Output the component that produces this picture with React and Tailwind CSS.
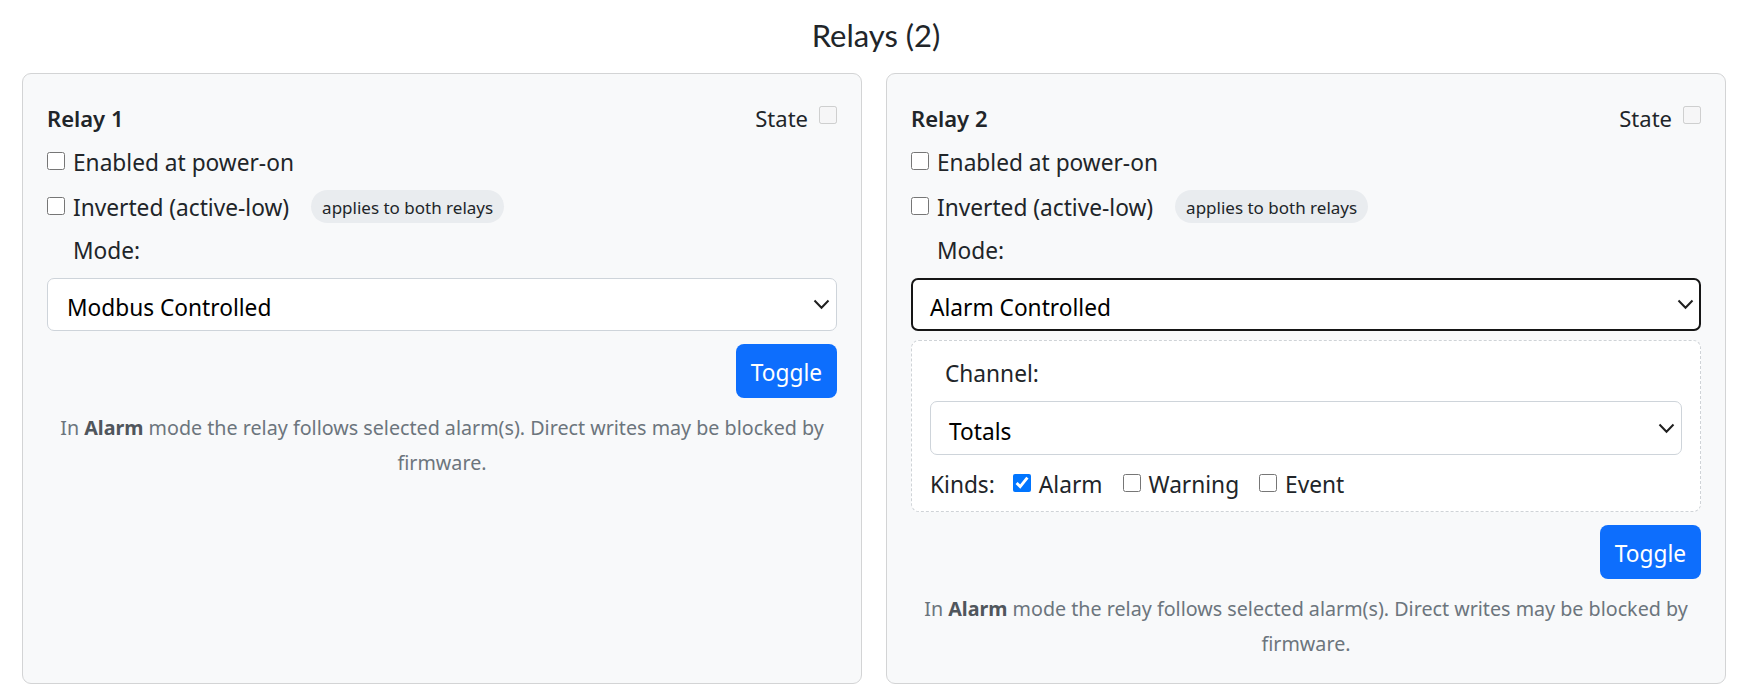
import React from "react";

const relays = [
  { name: "Relay 1", mode: "Modbus Controlled", focused: false, alarm: false },
  { name: "Relay 2", mode: "Alarm Controlled", focused: true, alarm: true },
];

function Chevron() {
  return (
    <svg width="17" height="11" viewBox="0 0 17 11" className="shrink-0">
      <path d="M1.5 1.5 8.5 8.8 15.5 1.5" fill="none" stroke="#1f1f1f" strokeWidth="2" />
    </svg>
  );
}

function Check({ checked = false, disabled = false }) {
  return (
    <input
      type="checkbox"
      defaultChecked={checked}
      disabled={disabled}
      className="m-0 h-[18px] w-[18px] shrink-0"
    />
  );
}

function RelayCard({ relay }) {
  return (
    <div className="flex flex-col rounded-[9px] border border-[#d3d4d5] bg-[#f8f9fa] px-6 pb-[22px] pt-[27px]">
      {/* Header */}
      <div className="flex h-[34px] items-center justify-between leading-[34px]">
        <span className="text-[22px] font-semibold">{relay.name}</span>
        <div className="flex items-center gap-[11px]">
          <span className="text-[22px]">State</span>
          <span className="-mt-[6px] flex">
            <Check disabled />
          </span>
        </div>
      </div>

      <label className="mt-[9px] flex h-[34px] items-center gap-2 leading-[31px]">
        <Check />
        <span className="pt-[3px]">Enabled at power-on</span>
      </label>

      <div className="mt-[11px] flex h-[34px] items-center leading-[31px]">
        <label className="flex items-center gap-2">
          <Check />
          <span className="pt-[3px]">Inverted (active-low)</span>
        </label>
        <span className="ml-[22px] flex h-[33px] items-center rounded-full bg-[#e9ecef] px-[11px] pt-[2px] text-[17px] text-[#212529]">
          applies to both relays
        </span>
      </div>

      <div className="mt-[9px] h-[34px] pl-[26px] pt-[3px] leading-[31px]">Mode:</div>

      <div
        className={
          relay.focused
            ? "mt-[12px] flex h-[53px] items-center justify-between rounded-[7px] border-2 border-[#161616] bg-white pl-[17px] pr-[5px] text-black"
            : "mt-[12px] flex h-[53px] items-center justify-between rounded-[7px] border border-[#ced4da] bg-white pl-[19px] pr-[6px] text-black"
        }
      >
        <span className="pt-[7px] leading-[30px]">{relay.mode}</span>
        <Chevron />
      </div>

      {relay.alarm && (
        <div className="mt-[9px] rounded-[8px] border border-dashed border-[#cfd3d7] bg-white px-[18px] pb-[11px] pt-[14px]">
          <div className="h-[34px] pl-[15px] pt-[3px] leading-[31px]">Channel:</div>
          <div className="mt-[12px] flex h-[54px] items-center justify-between rounded-[7px] border border-[#ced4da] bg-white pl-[18px] pr-[6px] text-black">
            <span className="pt-[7px] leading-[30px]">Totals</span>
            <Chevron />
          </div>
          <div className="mt-[11px] flex h-[34px] items-center leading-[31px]">
            <span className="pt-[3px]">Kinds:</span>
            <label className="ml-[18px] flex items-center gap-2">
              <Check checked />
              <span className="pt-[3px]">Alarm</span>
            </label>
            <label className="ml-[20px] flex items-center gap-2">
              <Check />
              <span className="pt-[3px]">Warning</span>
            </label>
            <label className="ml-[20px] flex items-center gap-2">
              <Check />
              <span className="pt-[3px]">Event</span>
            </label>
          </div>
        </div>
      )}

      <div className="mt-[13px] flex justify-end">
        <button className="h-[54px] w-[101px] rounded-[8px] bg-[#0d6efd] pt-[4px] text-white">
          Toggle
        </button>
      </div>

      <p className="mt-[12px] text-center text-[19.7px] leading-[35px] text-[#6c757d]">
        In <b className="font-bold text-[#50565c]">Alarm</b> mode the relay follows selected
        alarm(s). Direct writes may be blocked by firmware.
      </p>
    </div>
  );
}

export default function App() {
  return (
    <div className="min-h-screen bg-white pb-[13px] font-['Noto_Sans',sans-serif] text-[22.7px] text-[#212529]">
      <h1 className="pt-[17px] text-center font-['Lato',sans-serif] text-[31px] leading-[36px] text-[#212529]">
        Relays (2)
      </h1>
      <div className="mt-[20px] grid grid-cols-2 gap-6 pl-[22px] pr-[26px]">
        {relays.map((r) => (
          <RelayCard key={r.name} relay={r} />
        ))}
      </div>
    </div>
  );
}
